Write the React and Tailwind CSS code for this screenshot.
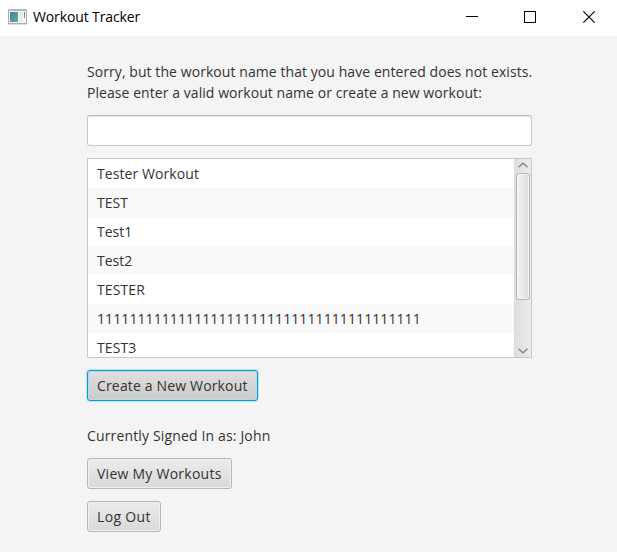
const WORKOUTS = [
  { name: "Tester Workout", tracking: "tracking-[0.08px]" },
  { name: "TEST", tracking: "tracking-[0px]" },
  { name: "Test1", tracking: "tracking-[0px]" },
  { name: "Test2", tracking: "tracking-[0px]" },
  { name: "TESTER", tracking: "tracking-[0.1px]" },
  { name: "1".repeat(40), tracking: "tracking-[0.09px]" },
  { name: "TEST3", tracking: "tracking-[0.1px]" },
];

function TitleBar() {
  return (
    <header className="flex h-9 items-start bg-white text-black">
      <svg className="mt-[9px] ml-2 h-4 w-[19px] shrink-0" viewBox="0 0 19 16" shapeRendering="crispEdges">
        <defs>
          <linearGradient id="pane" x1="0" y1="0" x2="1" y2="1">
            <stop offset="0" stopColor="#4a78a8" />
            <stop offset="1" stopColor="#5fb582" />
          </linearGradient>
        </defs>
        <rect x="0.5" y="0.5" width="18" height="14" fill="#f4f4f4" stroke="#a9adb3" />
        <rect x="0" y="0" width="19" height="2" fill="#b4b8bf" />
        <rect x="2" y="3" width="8" height="10" fill="url(#pane)" />
        <rect x="11" y="3" width="4" height="10" fill="#e8eaec" />
        <rect x="16" y="3" width="1" height="6" fill="url(#pane)" />
        <rect x="0" y="15" width="19" height="1" fill="#d9dadd" />
      </svg>
      <h1 className="ml-[6px] text-[14px] leading-[34px] tracking-[-0.12px]">Workout Tracker</h1>
      <div className="ml-auto flex items-center pt-[11px] pr-[22px]">
        <svg className="h-3 w-3" viewBox="0 0 12 12" shapeRendering="crispEdges">
          <rect x="0" y="5" width="12" height="1" fill="#000" />
        </svg>
        <svg className="ml-[46px] h-3 w-3" viewBox="0 0 12 12" shapeRendering="crispEdges">
          <rect x="0.5" y="0.5" width="11" height="11" fill="none" stroke="#000" />
        </svg>
        <svg className="ml-[47px] h-3 w-3" viewBox="0 0 12 12">
          <path d="M0.3 0.3 11.7 11.7M11.7 0.3 0.3 11.7" stroke="#000" strokeWidth="1.1" />
        </svg>
      </div>
    </header>
  );
}

function ScrollBar() {
  return (
    <div className="flex w-[17px] shrink-0 flex-col border-l border-[#dcdcdc] bg-linear-to-r from-[#dfdfdf] to-[#ebebeb]">
      <svg className="h-[14px] w-4" viewBox="0 0 16 14">
        <path d="M3.5 8.2 8 4.2 12.5 8.2" fill="none" stroke="#858585" strokeWidth="1.5" />
      </svg>
      <div className="ml-px h-[127px] w-[14px] rounded-[3px] border border-[#b5b5b5] bg-linear-to-r from-[#f3f3f3] to-[#dbdbdb] shadow-[inset_0_0_0_1px_#f6f6f6]" />
      <svg className="mt-auto h-[14px] w-4" viewBox="0 0 16 14">
        <path d="M3.5 5.8 8 9.8 12.5 5.8" fill="none" stroke="#858585" strokeWidth="1.5" />
      </svg>
    </div>
  );
}

function Button({ className = "", children }) {
  return (
    <button
      className={`flex h-[31px] items-center rounded-[3px] border border-[#b5b5b5] bg-linear-to-b from-[#ececec] to-[#d9d9d9] pl-[9px] whitespace-nowrap shadow-[inset_0_0_0_1px_#f0f0f0] ${className}`}
    >
      {children}
    </button>
  );
}

export default function App() {
  return (
    <div className="h-[552px] w-[617px] overflow-hidden bg-[#f4f4f4] font-['Open_Sans','Noto_Sans',sans-serif] text-[14px] text-[#333333]">
      <TitleBar />
      <main className="ml-[87px] flex w-[445px] flex-col items-start pt-[25px]">
        <p className="leading-[21px] whitespace-nowrap">
          <span className="block tracking-[0.07px]">Sorry, but the workout name that you have entered does not exists.</span>
          <span className="block tracking-[0.06px]">Please enter a valid workout name or create a new workout:</span>
        </p>
        <input
          aria-label="Workout name"
          className="mt-3 h-[31px] w-full rounded-[3px] border border-[#c8c8c8] border-t-[#b5b5b5] bg-white px-2 shadow-[inset_0_2px_2px_-1px_#e4e4e4] outline-none"
        />
        <div className="mt-3 flex h-[200px] w-full overflow-hidden border border-[#c8c8c8] bg-white">
          <ul className="grow overflow-hidden">
            {WORKOUTS.map(({ name, tracking }) => (
              <li key={name} className={`h-[29px] pl-[9px] leading-[29px] even:bg-[#f9f9f9] ${tracking}`}>
                {name}
              </li>
            ))}
          </ul>
          <ScrollBar />
        </div>
        <div className="mt-3">
          <button className="flex h-[31px] w-[171px] items-center rounded-[3px] border border-[#039ed3] bg-linear-to-b from-[#e0e0e0] to-[#cacaca] pl-[9px] tracking-[0.16px] whitespace-nowrap shadow-[0_0_0_1px_#bfe5f3,inset_0_0_0_1px_#b9d9e4]">
            Create a New Workout
          </button>
        </div>
        <p className="mt-6 leading-[21px] tracking-[0.15px]">Currently Signed In as: John</p>
        <Button className="mt-3 w-[145px] tracking-[0.25px]">View My Workouts</Button>
        <Button className="mt-3 w-[74px] tracking-[0.35px]">Log Out</Button>
      </main>
    </div>
  );
}
